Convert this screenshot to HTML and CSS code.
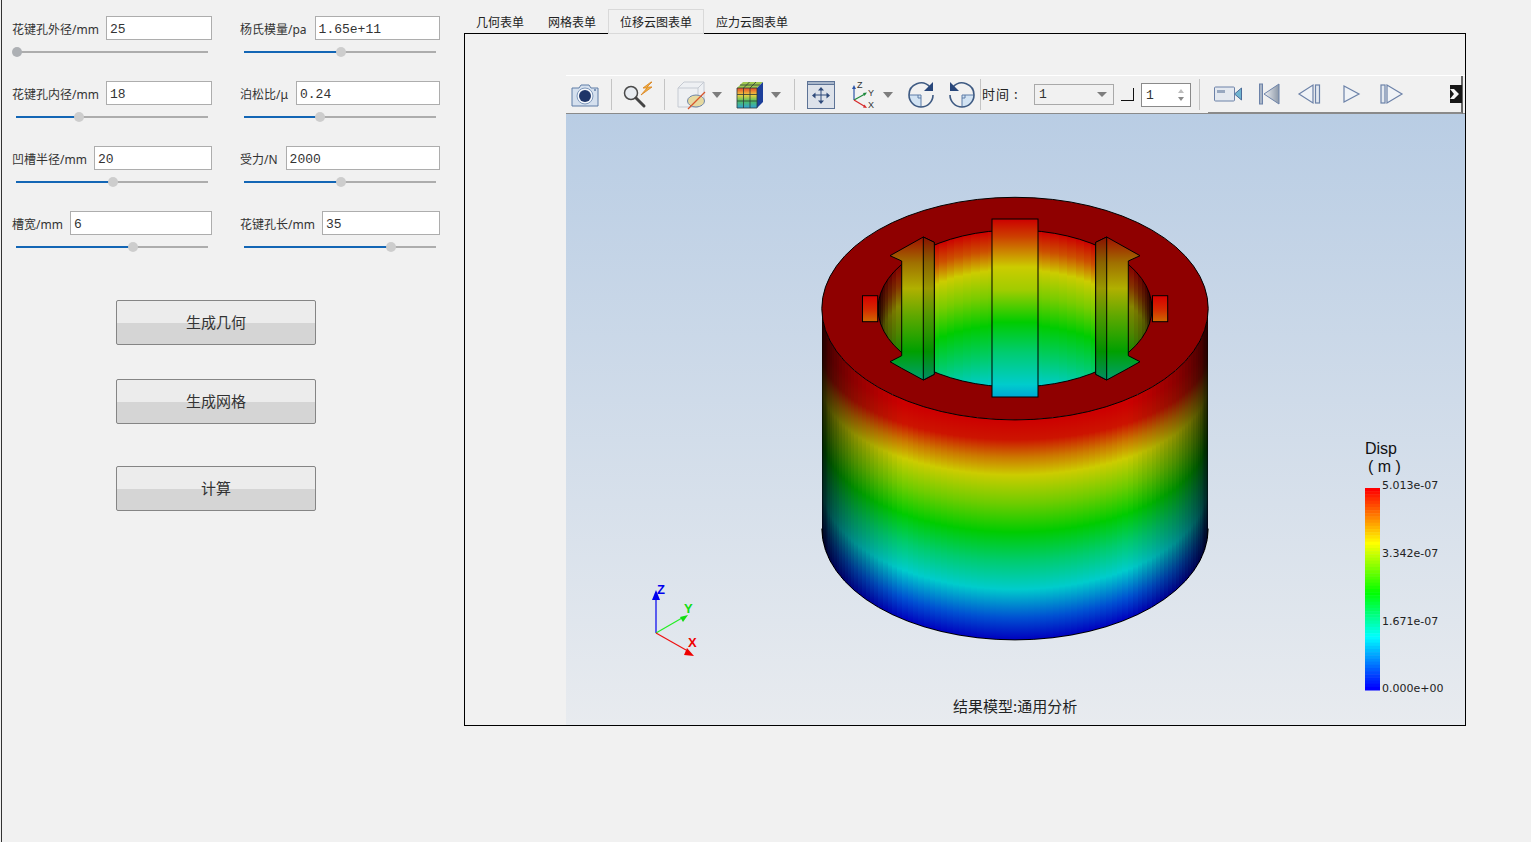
FILE: index.html
```html
<!DOCTYPE html>
<html lang="en">
<head>
    <meta charset="UTF-8">
    <title>花键孔分析</title>
    <link rel="stylesheet" href="styles.css">
</head>
<body>
    <aside class="panel">
        <div class="params">
            <div class="param">
                <div class="field"><label>花键孔外径/mm</label><input class="value" value="25"></div>
                <div class="slider"><div class="slider-fill" style="width:1px"></div><div class="slider-thumb slider-thumb-min" style="left:1px"></div></div>
            </div>
            <div class="param">
                <div class="field field-wide"><label>杨氏模量/pa</label><input class="value" value="1.65e+11"></div>
                <div class="slider"><div class="slider-fill" style="width:97px"></div><div class="slider-thumb" style="left:97px"></div></div>
            </div>
            <div class="param">
                <div class="field"><label>花键孔内径/mm</label><input class="value" value="18"></div>
                <div class="slider"><div class="slider-fill" style="width:63px"></div><div class="slider-thumb" style="left:63px"></div></div>
            </div>
            <div class="param">
                <div class="field field-wide"><label>泊松比/μ</label><input class="value" value="0.24"></div>
                <div class="slider"><div class="slider-fill" style="width:76px"></div><div class="slider-thumb" style="left:76px"></div></div>
            </div>
            <div class="param">
                <div class="field"><label>凹槽半径/mm</label><input class="value" value="20"></div>
                <div class="slider"><div class="slider-fill" style="width:97px"></div><div class="slider-thumb" style="left:97px"></div></div>
            </div>
            <div class="param">
                <div class="field field-wide"><label>受力/N</label><input class="value" value="2000"></div>
                <div class="slider"><div class="slider-fill" style="width:97px"></div><div class="slider-thumb" style="left:97px"></div></div>
            </div>
            <div class="param">
                <div class="field"><label>槽宽/mm</label><input class="value" value="6"></div>
                <div class="slider"><div class="slider-fill" style="width:117px"></div><div class="slider-thumb" style="left:117px"></div></div>
            </div>
            <div class="param">
                <div class="field"><label>花键孔长/mm</label><input class="value" value="35"></div>
                <div class="slider"><div class="slider-fill" style="width:147px"></div><div class="slider-thumb" style="left:147px"></div></div>
            </div>
        </div>
        <div class="actions">
            <button class="action">生成几何</button>
            <button class="action">生成网格</button>
            <button class="action action-last">计算</button>
        </div>
    </aside>

    <section class="tabs">
        <div class="tab-bar">
            <div class="tab">几何表单</div>
            <div class="tab">网格表单</div>
            <div class="tab tab-active">位移云图表单</div>
            <div class="tab">应力云图表单</div>
        </div>
        <div class="tab-frame">
            <div class="viewer">
                <div class="toolbar">
                    <svg class="ico ml4" viewBox="0 0 30 30">
                        <path d="M2 8h7l2-3h8l2 3h7v18H2z" fill="#d5e0ee" stroke="#5f7da6" stroke-linejoin="round"/>
                        <circle cx="15" cy="16" r="8" fill="#f4f7fb" stroke="#7f98bb"/>
                        <circle cx="15" cy="16" r="6" fill="#1f3568"/>
                        <circle cx="25" cy="10" r="1" fill="#5f7da6"/>
                    </svg>
                    <div class="sep ml11"></div>
                    <svg class="ico ml11" viewBox="0 0 30 30">
                        <circle cx="8" cy="13" r="6.5" fill="#e8ecf1" stroke="#4a4a4a" stroke-width="1.5"/>
                        <path d="M13 18l8 8" stroke="#444" stroke-width="3" stroke-linecap="round"/>
                        <path d="M28 2l-8 6h4l-6 7 11-8h-5l5-5z" fill="#f0b040" stroke="#d8801c" stroke-width=".8"/>
                    </svg>
                    <div class="sep ml11"></div>
                    <svg class="ico ml11" viewBox="0 0 30 30">
                        <path d="M2 8l6-6h20v19l-6 6H2z" fill="#eef0f3" stroke="#c5cad2"/>
                        <path d="M2 8h20v19M22 8l6-6" fill="none" stroke="#c5cad2"/>
                        <ellipse cx="20" cy="21" rx="8.500" ry="6" fill="#e6d9a0" stroke="#6f86a8"/>
                        <path d="M12 29L29 12" stroke="#d8552c" stroke-width="1.200"/>
                    </svg>
                    <div class="drop ml6"></div>
                    <svg class="ico ml13" viewBox="0 0 30 30">
                        <defs>
                            <linearGradient id="cubeFace" x1="0" y1="0" x2="0" y2="1">
                                <stop offset="0" stop-color="#e84a2a"/>
                                <stop offset=".35" stop-color="#f0d040"/>
                                <stop offset=".65" stop-color="#50c060"/>
                                <stop offset="1" stop-color="#30a0d8"/>
                            </linearGradient>
                        </defs>
                        <path d="M2 8h20v20H2z" fill="url(#cubeFace)"/>
                        <path d="M2 8l6-6h20l-6 6z" fill="#a0c850"/>
                        <path d="M22 8l6-6v20l-6 6z" fill="#1c3f9a"/>
                        <path d="M2 8h20v20H2zM2 14.500h20M2 21h20M8.500 8v20M15 8v20M8.500 8l6-6M15 8l6-6M5 5h20" fill="none" stroke="#2c3a3a" stroke-width=".8"/>
                    </svg>
                    <div class="drop ml6"></div>
                    <div class="sep ml13"></div>
                    <svg class="ico ml11" viewBox="0 0 30 30">
                        <rect x="1.500" y="1.500" width="27" height="27" fill="#dde2ea" stroke="#5d7396"/>
                        <rect x="1.500" y="1.500" width="27" height="3" fill="#a8b6ca" stroke="#5d7396"/>
                        <path d="M15 15V9M15 15v6M15 15H8M15 15h7" stroke="#2f4a7a"/>
                        <path d="M15 7l-3 3.500h6zM15 24l-3-3.500h6zM6 15.500l3.500-3v6zM24 15.500l-3.500-3v6z" fill="#2f4a7a"/>
                    </svg>
                    <svg class="ico ml13" viewBox="0 0 30 30">
                        <path d="M5 20V8" stroke="#2c55a8" stroke-width="1.200"/>
                        <path d="M5 5l-2 4h4z" fill="#2c55a8"/>
                        <path d="M5 20l11-6" stroke="#1d8a3c" stroke-width="1.200"/>
                        <path d="M18 12.500l-4 .5 1.500 3z" fill="#1d8a3c"/>
                        <path d="M5 20l10 6" stroke="#d62a2a" stroke-width="1.200"/>
                        <path d="M18 28l-4-.5 1.500-3z" fill="#d62a2a"/>
                        <text class="axis-mini" x="8" y="8">Z</text>
                        <text class="axis-mini" x="19" y="16">Y</text>
                        <text class="axis-mini" x="19" y="28">X</text>
                    </svg>
                    <div class="drop ml4"></div>
                    <svg class="ico ml13" viewBox="0 0 30 30">
                        <path d="M3 15h12v12A12 12 0 0 1 3 15z" fill="#d2e3f3"/>
                        <path d="M3 15h12v12M12 15v3h3" fill="none" stroke="#5d7da8"/>
                        <path d="M24 7A12 12 0 0 0 3 15a12 12 0 0 0 12 12a12 12 0 0 0 12-12" fill="none" stroke="#3e5a82" stroke-width="1.600"/>
                        <path d="M27 2v9h-9z" fill="#28467a"/>
                    </svg>
                    <svg class="ico ml11" viewBox="0 0 30 30">
                        <path d="M27 15H15v12A12 12 0 0 0 27 15z" fill="#d2e3f3"/>
                        <path d="M27 15H15v12M18 15v3h-3" fill="none" stroke="#5d7da8"/>
                        <path d="M6 7a12 12 0 0 1 21 8a12 12 0 0 1-12 12a12 12 0 0 1-12-12" fill="none" stroke="#3e5a82" stroke-width="1.600"/>
                        <path d="M3 2v9h9z" fill="#28467a"/>
                    </svg>
                    <div class="sep ml3"></div>
                    <span class="time-label">时间 :</span>
                    <div class="combo"><span>1</span><i class="combo-arrow"></i></div>
                    <div class="corner"></div>
                    <div class="spin"><span>1</span><i class="spin-up"></i><i class="spin-down"></i></div>
                    <div class="sep ml8"></div>
                    <div class="player">
                        <svg class="ico ml5" viewBox="0 0 30 30">
                            <rect x="1.500" y="8" width="20" height="14" rx="1" fill="#e4e9f0" stroke="#6c82a8"/>
                            <rect x="4" y="11" width="8" height="3" fill="#98a8c0"/>
                            <path d="M21.500 15l7-6v12z" fill="#6fb4d0" stroke="#4c6c98"/>
                        </svg>
                        <svg class="ico-sm ml15" viewBox="0 0 22 30">
                            <defs>
                                <linearGradient id="firstFill" x1="0" y1="0" x2="1" y2="0">
                                    <stop offset="0" stop-color="#f0f2f5"/>
                                    <stop offset="1" stop-color="#8c98a8"/>
                                </linearGradient>
                            </defs>
                            <rect x="1.500" y="5" width="3" height="20" fill="#a8b4c6" stroke="#6c82a8"/>
                            <path d="M21 5v20L6 15z" fill="url(#firstFill)" stroke="#6c82a8"/>
                        </svg>
                        <svg class="ico-md ml17" viewBox="0 0 26 30">
                            <path d="M16 6v18L2 15z" fill="#f0f3f7" stroke="#6c82a8" stroke-width="1.200"/>
                            <rect x="18.500" y="6" width="4" height="18" fill="#e4e9f0" stroke="#6c82a8" stroke-width="1.200"/>
                        </svg>
                        <svg class="ico-play ml19" viewBox="0 0 20 30">
                            <path d="M2 7v16l15-8z" fill="#f0f3f7" stroke="#6c82a8" stroke-width="1.200"/>
                        </svg>
                        <svg class="ico-md ml17" viewBox="0 0 26 30">
                            <rect x="2" y="6" width="4" height="18" fill="#e4e9f0" stroke="#6c82a8" stroke-width="1.200"/>
                            <path d="M8 6v18l15-9z" fill="#f0f3f7" stroke="#6c82a8" stroke-width="1.200"/>
                        </svg>
                        <svg class="ico-expand" viewBox="0 0 12 18">
                            <rect width="12" height="18" fill="#161616"/>
                            <path d="M0 4h4l5 5-5 5H0l4-5z" fill="#f4f4f4"/>
                        </svg>
                    </div>
                </div>
                <div class="scene">
                    <svg class="scene-svg" viewBox="566 114 899 611">
                        <defs>
                            <linearGradient id="bg" x1="0" y1="0" x2="0" y2="1">
                                <stop offset="0" stop-color="#b9cde4"/>
                                <stop offset="1" stop-color="#e8ebef"/>
                            </linearGradient>
                            <linearGradient id="slotCenter" gradientUnits="userSpaceOnUse" x1="0" y1="219" x2="0" y2="397">
                                <stop offset="0" stop-color="#cc0000"/>
                                <stop offset=".1" stop-color="#cc4000"/>
                                <stop offset=".27" stop-color="#cccc00"/>
                                <stop offset=".4" stop-color="#a0cc00"/>
                                <stop offset=".58" stop-color="#00cc00"/>
                                <stop offset=".75" stop-color="#00cc70"/>
                                <stop offset=".93" stop-color="#00cccc"/>
                                <stop offset="1" stop-color="#00a8d4"/>
                            </linearGradient>
                            <linearGradient id="slotSide" gradientUnits="userSpaceOnUse" x1="0" y1="237" x2="0" y2="380">
                                <stop offset="0" stop-color="#a01000"/>
                                <stop offset=".18" stop-color="#a07000"/>
                                <stop offset=".36" stop-color="#b0b000"/>
                                <stop offset=".55" stop-color="#60a800"/>
                                <stop offset=".8" stop-color="#00a000"/>
                                <stop offset="1" stop-color="#00a070"/>
                            </linearGradient>
                            <linearGradient id="slotSideDark" gradientUnits="userSpaceOnUse" x1="0" y1="237" x2="0" y2="380">
                                <stop offset="0" stop-color="#8a1000"/>
                                <stop offset=".18" stop-color="#8a6400"/>
                                <stop offset=".36" stop-color="#989800"/>
                                <stop offset=".55" stop-color="#509800"/>
                                <stop offset=".8" stop-color="#009000"/>
                                <stop offset="1" stop-color="#009064"/>
                            </linearGradient>
                            <linearGradient id="slotSmall" gradientUnits="userSpaceOnUse" x1="0" y1="296" x2="0" y2="322">
                                <stop offset="0" stop-color="#d60000"/>
                                <stop offset=".5" stop-color="#d42800"/>
                                <stop offset="1" stop-color="#d06a00"/>
                            </linearGradient>
                            <clipPath id="holeClip"><ellipse cx="1015" cy="308.500" rx="137" ry="78.500"/></clipPath>
                        </defs>
                        <rect x="566" y="114" width="899" height="611" fill="url(#bg)"/>

                        <g id="outerWall" shape-rendering="crispEdges"></g>
                        <path class="edge" d="M821.800 528.600A193.200 111.300 0 0 0 1208.200 528.600" fill="none"/>
                        <ellipse class="edge" cx="1015" cy="308.600" rx="193.200" ry="111.300" fill="#8f0000"/>
                        <g id="innerWall" clip-path="url(#holeClip)" shape-rendering="crispEdges"></g>
                        <ellipse class="edge" cx="1015" cy="308.500" rx="137" ry="78.500" fill="none"/>

                        <path class="edge" d="M890 255.700L923.300 237L934.300 242.300V374.300L923.300 380L901.700 368.300L890 361.700L901.700 355.700V261z" fill="url(#slotSide)"/>
                        <path class="edge" d="M1140 255.700L1106.700 237L1095.700 242.300V374.300L1106.700 380L1128.300 368.300L1140 361.700L1128.300 355.700V261z" fill="url(#slotSide)"/>
                        <path class="edge" d="M923.300 237L934.300 242.300V374.300L923.300 380z" fill="url(#slotSideDark)"/>
                        <path class="edge" d="M1106.700 237L1095.700 242.300V374.300L1106.700 380z" fill="url(#slotSideDark)"/>
                        <rect class="edge" x="992" y="219" width="46" height="178" fill="url(#slotCenter)"/>
                        <rect class="edge" x="862.500" y="295.700" width="15.200" height="26" fill="url(#slotSmall)"/>
                        <rect class="edge" x="1152.500" y="295.700" width="15.200" height="26" fill="url(#slotSmall)"/>

                        <g id="legendBar"></g>

                        <path d="M656 633V598" stroke="#0000ee" stroke-width="1.200"/>
                        <path d="M656 590l-4 10h8z" fill="#0000ee"/>
                        <path d="M656 633l26-15" stroke="#22ee22" stroke-width="1.200"/>
                        <path d="M688 615l-8 2 3 5z" fill="#11dd11"/>
                        <path d="M656 633l30 17" stroke="#ee1111" stroke-width="1.200"/>
                        <path d="M694 656l-10-1 3-7z" fill="#ee0000"/>
                        <text class="axis-label axis-z" x="657" y="594">Z</text>
                        <text class="axis-label axis-y" x="684" y="613">Y</text>
                        <text class="axis-label axis-x" x="688" y="647">X</text>
                    </svg>
                    <div class="legend-title">Disp<span class="legend-unit">( m )</span></div>
                    <div class="legend-tick tick-a">5.013e-07</div>
                    <div class="legend-tick tick-b">3.342e-07</div>
                    <div class="legend-tick tick-c">1.671e-07</div>
                    <div class="legend-tick tick-d">0.000e+00</div>
                    <div class="scene-caption">结果模型:通用分析</div>
                </div>
            </div>
        </div>
    </section>
    <script src="script.js"></script>
</body>
</html>
```

FILE: styles.css
```css
* {
    margin: 0;
    padding: 0;
    box-sizing: border-box;
}
body {
    font-family: "Noto Sans", "Noto Sans CJK SC", sans-serif;
    background: #f1f1f1;
    color: #333;
    width: 1531px;
    height: 842px;
    overflow: hidden;
    display: flex;
}

/* left panel */
.panel {
    width: 463px;
    margin-left: 1px;
    padding: 16px 0 0 10px;
    border-left: 1px solid #333;
}
.params {
    display: grid;
    grid-template-columns: 200px 200px;
    column-gap: 28px;
    row-gap: 28px;
}
.field {
    display: flex;
    align-items: center;
    gap: 7px;
    height: 24px;
}
.field-wide {
    gap: 8px;
}
.field label {
    padding-top: 1px;
    font-size: 12px;
    white-space: nowrap;
}
.value {
    flex: 1;
    min-width: 0;
    height: 24px;
    border: 1px solid #adadad;
    background: #fff;
    padding: 2px 3px 0;
    font-family: "Liberation Mono", monospace;
    font-size: 13px;
    color: #333;
}
.slider {
    position: relative;
    height: 2px;
    margin: 11px 4px 0;
    background: #adadad;
}
.slider-fill {
    height: 2px;
    background: #1366b5;
}
.slider-thumb {
    position: absolute;
    top: -4px;
    width: 10px;
    height: 10px;
    margin-left: -5px;
    border-radius: 50%;
    background: #cdcdcd;
}
.slider-thumb-min {
    background: #adb0b4;
}
.actions {
    display: flex;
    flex-direction: column;
    margin: 52px 0 0 104px;
}
.action {
    width: 200px;
    height: 45px;
    margin-bottom: 34px;
    padding-bottom: 2px;
    border: 1px solid #858585;
    border-radius: 2px;
    background: linear-gradient(#ececec 0, #ececec 50%, #d5d5d5 52%, #d5d5d5 100%);
    font-family: "Noto Sans CJK SC", sans-serif;
    font-size: 15px;
    color: #333;
}
.action:nth-child(2) {
    margin-bottom: 42px;
}
.action-last {
    margin-bottom: 0;
}

/* tabs */
.tabs {
    width: 1002px;
    padding-top: 9px;
    display: flex;
    flex-direction: column;
    height: 726px;
}
.tab-bar {
    display: flex;
    height: 24px;
}
.tab {
    padding: 0 12px;
    font-size: 12px;
    line-height: 28px;
    color: #222;
}
.tab-active {
    position: relative;
    height: 25px;
    border: 1px solid #d9d9d9;
    padding: 0 11px;
    background: #f1f1f1;
    line-height: 26px;
    z-index: 1;
}
.tab-frame {
    flex: 1;
    border: 1px solid #000;
    padding: 41px 0 0 101px;
}
.viewer {
    height: 100%;
    display: flex;
    flex-direction: column;
}

/* toolbar */
.toolbar {
    height: 39px;
    display: flex;
    align-items: center;
    background: #f1f1f1;
    border-top: 1px solid #fff;
    border-bottom: 1px solid #8a8a8a;
}
.ico {
    width: 30px;
    height: 30px;
    flex: none;
}
.ico-sm {
    width: 22px;
    height: 30px;
    flex: none;
}
.ico-md {
    width: 26px;
    height: 30px;
    flex: none;
}
.ico-play {
    width: 20px;
    height: 30px;
    flex: none;
}
.ico-expand {
    width: 12px;
    height: 18px;
    margin-left: 45px;
    flex: none;
}
.sep {
    width: 1px;
    height: 31px;
    background: #c4c4c4;
    flex: none;
}
.drop {
    width: 0;
    height: 0;
    flex: none;
    border-left: 5px solid transparent;
    border-right: 5px solid transparent;
    border-top: 6px solid #7d7d7d;
}
.ml3 { margin-left: 3px; }
.ml4 { margin-left: 4px; }
.ml5 { margin-left: 5px; }
.ml6 { margin-left: 6px; }
.ml8 { margin-left: 8px; }
.ml11 { margin-left: 11px; }
.ml13 { margin-left: 13px; }
.ml15 { margin-left: 15px; }
.ml17 { margin-left: 17px; }
.ml19 { margin-left: 19px; }
.axis-mini {
    font-family: "Liberation Sans", sans-serif;
    font-size: 9px;
    fill: #333;
}
.time-label {
    width: 37px;
    margin-left: 1px;
    padding-bottom: 2px;
    font-family: "Noto Sans CJK SC", sans-serif;
    font-size: 13px;
    letter-spacing: 1px;
    color: #222;
    flex: none;
    white-space: nowrap;
}
.combo {
    position: relative;
    width: 80px;
    height: 21px;
    margin-left: 15px;
    border: 1px solid #a9a9a9;
    background: #f1f1f1;
    padding-left: 4px;
    font-family: "Liberation Mono", monospace;
    font-size: 13px;
    line-height: 20px;
    flex: none;
}
.combo-arrow {
    position: absolute;
    right: 6px;
    top: 7px;
    border-left: 5px solid transparent;
    border-right: 5px solid transparent;
    border-top: 5px solid #7d7d7d;
}
.corner {
    width: 13px;
    height: 13px;
    margin-left: 7px;
    border-right: 1px solid #111;
    border-bottom: 1px solid #111;
    flex: none;
}
.spin {
    position: relative;
    width: 50px;
    height: 24px;
    margin-left: 7px;
    border: 1px solid #8a8a8a;
    background: #fff;
    padding-left: 4px;
    font-family: "Liberation Mono", monospace;
    font-size: 13px;
    line-height: 23px;
    flex: none;
}
.spin-up,
.spin-down {
    position: absolute;
    right: 6px;
    border-left: 3px solid transparent;
    border-right: 3px solid transparent;
}
.spin-up {
    top: 5px;
    border-bottom: 4px solid #bdbdbd;
}
.spin-down {
    top: 13px;
    border-top: 4px solid #8a8a8a;
}
.player {
    width: 255px;
    height: 38px;
    margin-left: 8px;
    display: flex;
    align-items: center;
    align-self: flex-start;
    background: #f1f1f1;
    border-bottom: 2px solid #8a8a8a;
    border-right: 2px solid #666;
    flex: none;
}

/* 3d scene */
.scene {
    position: relative;
    flex: 1;
}
.scene-svg {
    display: block;
    width: 100%;
    height: 100%;
}
.edge {
    stroke: #000;
    stroke-width: 1;
}
.axis-label {
    font-family: "Liberation Sans", sans-serif;
    font-size: 13px;
    font-weight: bold;
}
.axis-z { fill: #0000ee; }
.axis-y { fill: #11dd11; }
.axis-x { fill: #ee0000; }
.legend-title {
    position: absolute;
    left: 799px;
    top: 326px;
    font-family: "Liberation Sans", sans-serif;
    font-size: 16px;
    line-height: 18px;
    color: #111;
}
.legend-unit {
    display: block;
    padding-left: 3px;
}
.legend-tick {
    position: absolute;
    left: 816px;
    font-family: "DejaVu Sans", sans-serif;
    font-size: 11px;
    line-height: 14px;
    color: #222;
}
.tick-a { top: 365px; }
.tick-b { top: 433px; }
.tick-c { top: 501px; }
.tick-d { top: 568px; }
.scene-caption {
    position: absolute;
    left: 387px;
    top: 582px;
    font-family: "Noto Sans CJK SC", sans-serif;
    font-size: 15px;
    line-height: 20px;
    color: #222;
    white-space: nowrap;
}
```

FILE: script.js
```js
const SVG_NS = 'http://www.w3.org/2000/svg';
const defs = document.querySelector('.scene-svg defs');

function el(name, attrs, parent) {
    const node = document.createElementNS(SVG_NS, name);
    for (const key in attrs) node.setAttribute(key, attrs[key]);
    parent.appendChild(node);
    return node;
}

function shaded(rgb, s) {
    return `rgb(${rgb.map(c => Math.round(c * s)).join(',')})`;
}

function addWall(group, id, opts) {
    for (let i = 0; i < opts.count; i++) {
        const a0 = opts.start + Math.PI * i / opts.count;
        const a1 = opts.start + Math.PI * (i + 1) / opts.count;
        const mid = (a0 + a1) / 2;
        const sin = Math.abs(Math.sin(mid));
        const shade = Math.min(1, sin * 1.2 + 0.02);
        const x0 = 1015 + opts.rx * Math.cos(a0), y0 = opts.cy + opts.ry * Math.sin(a0);
        const x1 = 1015 + opts.rx * Math.cos(a1), y1 = opts.cy + opts.ry * Math.sin(a1);
        const yMid = opts.cy + opts.ry * Math.sin(mid);

        // colour bands sit lower near the silhouette than a plain ellipse offset
        const grad = el('linearGradient', {
            id: `${id}${i}`, gradientUnits: 'userSpaceOnUse',
            x1: 0, y1: yMid + opts.sag * (1 - sin), x2: 0, y2: yMid + opts.height
        }, defs);
        opts.stops.forEach(stop => {
            el('stop', { offset: stop[0], 'stop-color': shaded(stop[1], shade) }, grad);
        });
        const pts = `${x0},${y0} ${x1},${y1} ${x1},${y1 + opts.height} ${x0},${y0 + opts.height}`;
        el('polygon', { points: pts, fill: `url(#${id}${i})` }, group);
    }
}

addWall(document.getElementById('outerWall'), 'outer', {
    count: 96, start: 0, rx: 193.2, ry: 111.3, cy: 308.6, height: 220, sag: 26,
    stops: [
        [0, [204, 0, 0]], [0.09, [204, 20, 0]], [0.17, [204, 120, 0]], [0.25, [204, 204, 0]], [0.38, [110, 204, 0]],
        [0.51, [0, 204, 0]], [0.64, [0, 204, 110]], [0.77, [0, 204, 204]], [0.9, [0, 80, 210]], [1, [0, 0, 190]]
    ]
});

addWall(document.getElementById('innerWall'), 'inner', {
    count: 48, start: Math.PI, rx: 137, ry: 78.5, cy: 308.5, height: 220, sag: 0,
    stops: [
        [0, [204, 0, 0]], [0.09, [204, 80, 0]], [0.18, [204, 204, 0]], [0.3, [120, 204, 0]],
        [0.43, [0, 204, 0]], [0.58, [0, 204, 110]], [0.7, [0, 204, 204]], [1, [0, 0, 190]]
    ]
});

// legend: 64 flat bands from red at the top to blue at the bottom
const legend = document.getElementById('legendBar');
const ramp = [
    [0, [255, 0, 0]], [0.27, [255, 255, 0]], [0.52, [0, 255, 0]], [0.74, [0, 255, 255]], [1, [0, 0, 255]]
];
for (let i = 0; i < 64; i++) {
    const t = i / 63;
    let k = 0;
    while (k < ramp.length - 2 && t > ramp[k + 1][0]) k++;
    const f = (t - ramp[k][0]) / (ramp[k + 1][0] - ramp[k][0]);
    const rgb = ramp[k][1].map((c, j) => c + (ramp[k + 1][1][j] - c) * f);
    el('rect', { x: 1365, y: 488 + i * 202 / 64, width: 15, height: 202 / 64 + 0.5, fill: shaded(rgb, 1) }, legend);
}
```
